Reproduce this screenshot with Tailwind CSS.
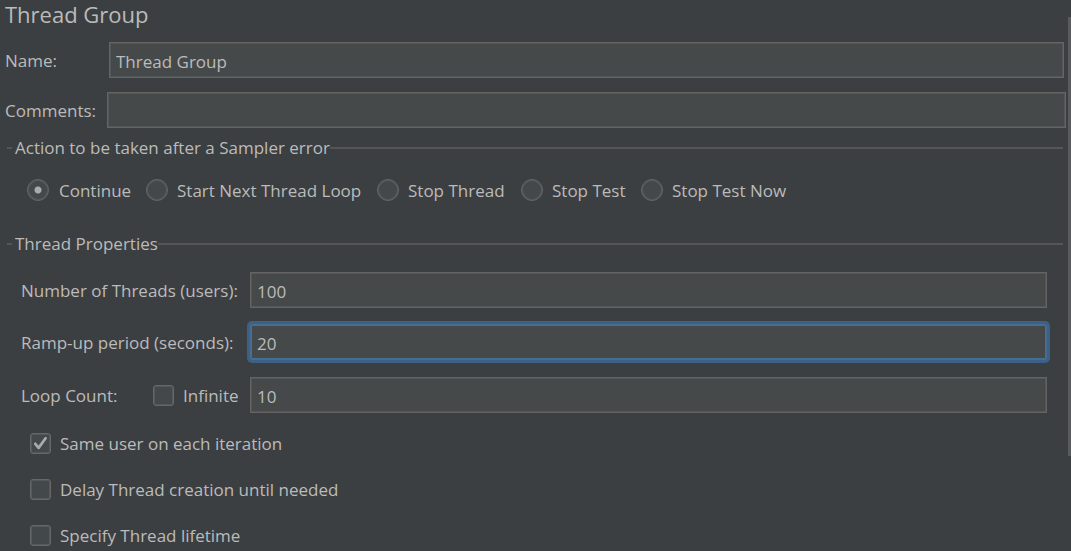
<!DOCTYPE html>
<html lang="en">
<head>
<meta charset="utf-8">
<meta name="viewport" content="width=device-width, initial-scale=1">
<title>Thread Group</title>
<script src="https://cdn.jsdelivr.net/npm/@tailwindcss/browser@4"></script>
</head>
<body class="flex h-screen overflow-hidden bg-[#3c3f41] font-['Segoe_UI','Open_Sans',sans-serif] text-[17px] leading-6 text-[#bbbbbb]">
<main class="min-w-0 flex-1">
  <h1 class="pl-[5px] text-[22px] leading-7">Thread Group</h1>

  <div class="mt-3.5 flex items-center pl-[5px] pr-1">
    <label for="name" class="w-[104px] pt-0.5">Name:</label>
    <input id="name" type="text" value="Thread Group" class="h-9 min-w-0 flex-1 border border-[#646464] bg-[#45494a] px-1.5 pt-0.5 inset-ring inset-ring-[#535657] outline-none">
  </div>
  <div class="mt-3.5 flex items-center pl-[5px] pr-0.5">
    <label for="comments" class="w-[102px] pt-0.5">Comments:</label>
    <input id="comments" type="text" class="h-9 min-w-0 flex-1 border border-[#646464] bg-[#45494a] px-1.5 inset-ring inset-ring-[#535657] outline-none">
  </div>

  <fieldset class="ml-[7px] mr-[5px] mt-2 border-t-2 border-[#555555]">
    <legend class="ml-[5px] pl-[3px]">Action to be taken after a Sampler error</legend>
    <div class="grid grid-cols-[119px_231px_144px_120px_auto] pb-[29px] pl-5 pt-[17px]">
      <label class="flex items-center gap-2.5"><input type="radio" name="action" checked class="size-[22px] shrink-0 appearance-none rounded-full border border-[#666767] bg-[#43494a] inset-ring inset-ring-[#555859] checked:bg-[radial-gradient(circle,#aaaaaa_3px,#43494a_4px)]"><span class="pt-0.5">Continue</span></label>
      <label class="flex items-center gap-[9px]"><input type="radio" name="action" class="size-[22px] shrink-0 appearance-none rounded-full border border-[#666767] bg-[#43494a] inset-ring inset-ring-[#555859] checked:bg-[radial-gradient(circle,#aaaaaa_3px,#43494a_4px)]"><span class="pt-0.5">Start Next Thread Loop</span></label>
      <label class="flex items-center gap-[9px]"><input type="radio" name="action" class="size-[22px] shrink-0 appearance-none rounded-full border border-[#666767] bg-[#43494a] inset-ring inset-ring-[#555859] checked:bg-[radial-gradient(circle,#aaaaaa_3px,#43494a_4px)]"><span class="pt-0.5">Stop Thread</span></label>
      <label class="flex items-center gap-[9px]"><input type="radio" name="action" class="size-[22px] shrink-0 appearance-none rounded-full border border-[#666767] bg-[#43494a] inset-ring inset-ring-[#555859] checked:bg-[radial-gradient(circle,#aaaaaa_3px,#43494a_4px)]"><span class="pt-0.5">Stop Test</span></label>
      <label class="flex items-center gap-[9px]"><input type="radio" name="action" class="size-[22px] shrink-0 appearance-none rounded-full border border-[#666767] bg-[#43494a] inset-ring inset-ring-[#555859] checked:bg-[radial-gradient(circle,#aaaaaa_3px,#43494a_4px)]"><span class="pt-0.5">Stop Test Now</span></label>
    </div>
  </fieldset>

  <fieldset class="ml-[7px] mr-[5px] border-t-2 border-[#555555]">
    <legend class="ml-[5px] pl-[3px]">Thread Properties</legend>
    <div class="flex flex-col gap-4 pl-3.5 pr-4 pt-4">
      <div class="flex items-center">
        <label for="threads" class="w-[229px] pt-0.5">Number of Threads (users):</label>
        <input id="threads" type="text" value="100" class="h-9 min-w-0 flex-1 border border-[#646464] bg-[#45494a] px-1.5 pt-0.5 inset-ring inset-ring-[#535657] outline-none">
      </div>
      <div class="flex items-center">
        <label for="ramp" class="w-[229px] pt-0.5">Ramp-up period (seconds):</label>
        <input id="ramp" type="text" value="20" class="h-9 min-w-0 flex-1 rounded-[2px] border border-[#466d94] bg-[#45494a] px-1.5 pt-0.5 inset-ring inset-ring-[#466d94] ring-3 ring-[#3d6185] outline-none">
      </div>
      <div class="flex items-center pt-px">
        <label for="loops" class="w-[132px] pt-0.5">Loop Count:</label>
        <label class="flex w-[97px] items-center gap-[9px]"><input type="checkbox" class="size-[21px] appearance-none rounded-[3px] border border-[#666767] bg-[#43494a] inset-ring inset-ring-[#555859]"><span class="pt-0.5">Infinite</span></label>
        <input id="loops" type="text" value="10" class="h-9 min-w-0 flex-1 border border-[#646464] bg-[#45494a] px-1.5 pt-0.5 inset-ring inset-ring-[#535657] outline-none">
      </div>
    </div>
    <div class="mt-[17px] flex flex-col gap-5 pl-[23px]">
      <label class="flex items-center gap-[9px]">
        <span class="grid">
          <input type="checkbox" checked class="col-start-1 row-start-1 size-[21px] appearance-none rounded-[3px] border border-[#666767] bg-[#43494a] inset-ring inset-ring-[#555859]">
          <svg class="pointer-events-none col-start-1 row-start-1 size-[21px]" viewBox="0 0 21 21" fill="none" stroke="#aaaaaa" stroke-width="2.7" stroke-linecap="round" stroke-linejoin="round" aria-hidden="true"><path d="M5.3 10.8 8.6 14.9 15.6 5.3"/></svg>
        </span>
        <span class="pt-0.5">Same user on each iteration</span>
      </label>
      <label class="flex items-center gap-[9px]"><input type="checkbox" class="size-[21px] appearance-none rounded-[3px] border border-[#666767] bg-[#43494a] inset-ring inset-ring-[#555859]"><span class="pt-0.5">Delay Thread creation until needed</span></label>
      <label class="flex items-center gap-[9px]"><input type="checkbox" class="size-[21px] appearance-none rounded-[3px] border border-[#666767] bg-[#43494a] inset-ring inset-ring-[#555859]"><span class="pt-0.5">Specify Thread lifetime</span></label>
    </div>
  </fieldset>
</main>
<div class="w-[3px] pt-[17px]"><div class="h-[439px] bg-[#595b5d]"></div></div>
</body>
</html>
